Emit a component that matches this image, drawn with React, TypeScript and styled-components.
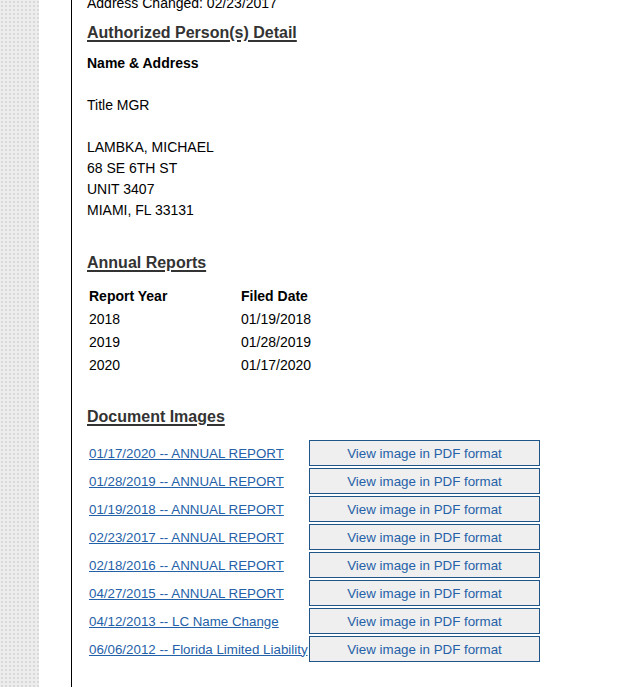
import React from "react";
import styled, { createGlobalStyle } from "styled-components";

const GlobalStyle = createGlobalStyle`
  html, body {
    margin: 0;
    padding: 0;
    background: #fff;
    overflow: hidden;
  }
  body {
    font-family: "Liberation Sans", Arial, sans-serif;
    font-size: 14px;
    color: #000;
  }
`;

const Page = styled.div`
  display: flex;
  height: 687px;
  overflow: hidden;
`;

const Sidebar = styled.div`
  width: 39px;
  flex-shrink: 0;
  background-color: #ededed;
  background-image: radial-gradient(circle, #d9d9d9 0.8px, transparent 1px);
  background-size: 4px 4px;
`;

const Gutter = styled.div`
  width: 32px;
  flex-shrink: 0;
`;

const Main = styled.div`
  flex: 1;
  border-left: 1px solid #000;
  padding-left: 15px;
`;

const Line = styled.div<{ $top?: number }>`
  line-height: 21px;
  margin-top: ${(p) => p.$top ?? 0}px;
`;

const Heading = styled.h2<{ $top: number }>`
  margin: ${(p) => p.$top}px 0 0;
  font-size: 16px;
  line-height: 20px;
  font-weight: bold;
  color: #333;
  text-decoration: underline;
  text-decoration-thickness: 2px;
  text-underline-offset: 2px;
`;

const Block = styled.div`
  margin-top: 10px;
  line-height: 21px;
`;

const Bold = styled.div`
  font-weight: bold;
`;

const ReportTable = styled.div`
  margin-top: 11px;
  padding-left: 2px;
  display: grid;
  grid-template-columns: 152px auto;
  grid-auto-rows: 23px;
  align-items: center;
`;

const HeadCell = styled.div`
  font-weight: bold;
`;

const Cell = styled.div``;

const DocTable = styled.div`
  margin-top: 12px;
  padding-left: 2px;
  display: grid;
  grid-template-columns: 220px 231px;
  grid-auto-rows: 28px;
  align-items: center;
`;

const DocLink = styled.a`
  color: #2561a8;
  font-size: 13.33px;
  text-decoration: underline;
  text-underline-offset: 1px;
  white-space: nowrap;
  cursor: pointer;
`;

const PdfButton = styled.button`
  height: 26px;
  width: 231px;
  box-sizing: border-box;
  border: 1px solid #1f5588;
  background: #efefef;
  color: #2561a8;
  font-family: "Liberation Sans", Arial, sans-serif;
  font-size: 13.33px;
  padding: 0;
  cursor: pointer;
`;

const reports = [
  ["2018", "01/19/2018"],
  ["2019", "01/28/2019"],
  ["2020", "01/17/2020"],
];

const documents = [
  "01/17/2020 -- ANNUAL REPORT",
  "01/28/2019 -- ANNUAL REPORT",
  "01/19/2018 -- ANNUAL REPORT",
  "02/23/2017 -- ANNUAL REPORT",
  "02/18/2016 -- ANNUAL REPORT",
  "04/27/2015 -- ANNUAL REPORT",
  "04/12/2013 -- LC Name Change",
  "06/06/2012 -- Florida Limited Liability",
];

export default function App() {
  return (
    <>
      <GlobalStyle />
      <Page>
        <Sidebar />
        <Gutter />
        <Main>
          <Line $top={-7}>Address Changed: 02/23/2017</Line>

          <Heading $top={9}>Authorized Person(s) Detail</Heading>
          <Block>
            <Bold>Name &amp; Address</Bold>
            <br />
            <div>Title MGR</div>
            <br />
            <div>LAMBKA, MICHAEL</div>
            <div>68 SE 6TH ST</div>
            <div>UNIT 3407</div>
            <div>MIAMI, FL 33131</div>
          </Block>

          <Heading $top={32}>Annual Reports</Heading>
          <ReportTable>
            <HeadCell>Report Year</HeadCell>
            <HeadCell>Filed Date</HeadCell>
            {reports.map(([year, date]) => (
              <React.Fragment key={year}>
                <Cell>{year}</Cell>
                <Cell>{date}</Cell>
              </React.Fragment>
            ))}
          </ReportTable>

          <Heading $top={31}>Document Images</Heading>
          <DocTable>
            {documents.map((doc) => (
              <React.Fragment key={doc}>
                <DocLink>{doc}</DocLink>
                <PdfButton>View image in PDF format</PdfButton>
              </React.Fragment>
            ))}
          </DocTable>
        </Main>
      </Page>
    </>
  );
}
